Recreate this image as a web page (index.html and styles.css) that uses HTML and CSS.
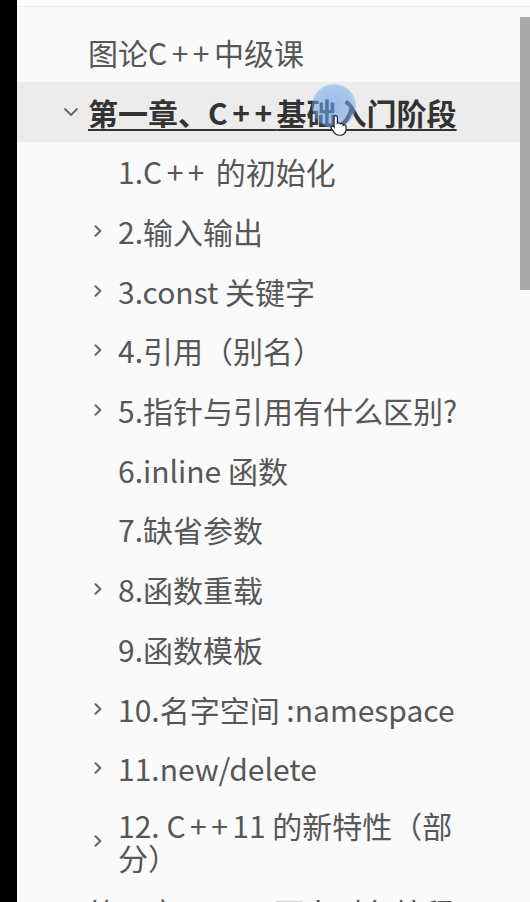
FILE: index.html
```html
<!DOCTYPE html>
<html lang="zh-CN">
<head>
<meta charset="utf-8">
<title>图论C++中级课</title>
<link rel="stylesheet" href="styles.css">
</head>
<body>
<div class="screen">
  <div class="edge"></div>
  <div class="panel">
    <div class="topline"></div>
    <div class="content">
      <ul class="tree">
        <li class="row lv1"><span class="twisty"></span><span class="label">图论<span class="cpp">C++</span>中级课</span></li>
        <li class="row lv1 active"><span class="twisty"><svg class="chev-down" width="14" height="8" viewBox="0 0 14 8"><polyline points="1,1 7,7 13,1"/></svg></span><span class="label strong">第一章、<span class="cpp">C++</span>基础入门阶段</span></li>
        <li class="row lv2"><span class="twisty"></span><span class="label">1.<span class="cpp">C++</span> 的初始化</span></li>
        <li class="row lv2"><span class="twisty"><svg class="chev-right" width="8" height="12" viewBox="0 0 8 12"><polyline points="1.5,1.2 6.3,6 1.5,10.8"/></svg></span><span class="label">2.输入输出</span></li>
        <li class="row lv2"><span class="twisty"><svg class="chev-right" width="8" height="12" viewBox="0 0 8 12"><polyline points="1.5,1.2 6.3,6 1.5,10.8"/></svg></span><span class="label">3.const 关键字</span></li>
        <li class="row lv2"><span class="twisty"><svg class="chev-right" width="8" height="12" viewBox="0 0 8 12"><polyline points="1.5,1.2 6.3,6 1.5,10.8"/></svg></span><span class="label">4.引用（别名）</span></li>
        <li class="row lv2"><span class="twisty"><svg class="chev-right" width="8" height="12" viewBox="0 0 8 12"><polyline points="1.5,1.2 6.3,6 1.5,10.8"/></svg></span><span class="label">5.指针与引用有什么区别?</span></li>
        <li class="row lv2"><span class="twisty"></span><span class="label">6.inline 函数</span></li>
        <li class="row lv2"><span class="twisty"></span><span class="label">7.缺省参数</span></li>
        <li class="row lv2"><span class="twisty"><svg class="chev-right" width="8" height="12" viewBox="0 0 8 12"><polyline points="1.5,1.2 6.3,6 1.5,10.8"/></svg></span><span class="label">8.函数重载</span></li>
        <li class="row lv2"><span class="twisty"></span><span class="label">9.函数模板</span></li>
        <li class="row lv2"><span class="twisty"><svg class="chev-right" width="8" height="12" viewBox="0 0 8 12"><polyline points="1.5,1.2 6.3,6 1.5,10.8"/></svg></span><span class="label">10.名字空间 :namespace</span></li>
        <li class="row lv2"><span class="twisty"><svg class="chev-right" width="8" height="12" viewBox="0 0 8 12"><polyline points="1.5,1.2 6.3,6 1.5,10.8"/></svg></span><span class="label">11.new/delete</span></li>
        <li class="row lv2 multi"><span class="twisty"><svg class="chev-right" width="8" height="12" viewBox="0 0 8 12"><polyline points="1.5,1.2 6.3,6 1.5,10.8"/></svg></span><span class="label">12. <span class="cpp">C++</span>11 的新特性（部分）</span></li>
        <li class="row lv1"><span class="twisty"><svg class="chev-right" width="8" height="12" viewBox="0 0 8 12"><polyline points="1.5,1.2 6.3,6 1.5,10.8"/></svg></span><span class="label">第二章、<span class="cpp">C++</span>面向对象编程</span></li>
      </ul>
      <div class="scrollbar"><div class="thumb"></div></div>
    </div>
  </div>
  <div class="cursor">
    <div class="halo"></div>
    <svg class="hand" width="20" height="24" viewBox="0 0 18 22"><path d="M6 1.5c.9 0 1.5.7 1.5 1.5v5.5c.3-.3.7-.5 1.2-.5.8 0 1.3.5 1.5 1.1.3-.3.7-.5 1.2-.5.9 0 1.5.7 1.5 1.6.3-.2.6-.3 1-.3.9 0 1.6.7 1.6 1.6V14c0 3-2.2 5.5-5.5 5.5H9c-2 0-3.3-.9-4.4-2.4L2 13.4c-.5-.7-.3-1.6.4-2 .6-.4 1.4-.3 1.900.3l.2.3V3c0-.8.7-1.5 1.5-1.5z"/></svg>
  </div>
</div>
</body>
</html>
```

FILE: styles.css
```css
html, body {
  margin: 0;
  padding: 0;
  background: #000;
  overflow: hidden;
}

.screen {
  position: relative;
  display: flex;
  width: 530px;
  height: 902px;
  overflow: hidden;
  font-family: "Noto Sans CJK SC", "Noto Sans", sans-serif;
}

.edge {
  width: 17px;
  flex: none;
  background: #000;
}

.panel {
  flex: 1;
  display: flex;
  flex-direction: column;
  background: #fafafa;
  min-width: 0;
}

.topline {
  height: 6px;
  flex: none;
  background: #fdfdfd;
  border-bottom: 1px solid #ededed;
}

.content {
  flex: 1;
  display: flex;
  min-height: 0;
}

.tree {
  flex: 1;
  list-style: none;
  margin: 0;
  padding: 15.15px 0 0 0;
  min-width: 0;
}

.row {
  display: flex;
  align-items: center;
  box-sizing: border-box;
  min-height: 59.7px;
  padding: 8.5px 62px 8.5px 0;
  font-size: 30px;
  line-height: 32px;
  color: #575757;
}

.row.multi {
  padding-top: 10.5px;
  padding-bottom: 10px;
}

.row.lv1 { padding-left: 47px; }
.row.lv2 { padding-left: 77px; }

.row.active {
  background: #ececec;
}

.twisty {
  flex: none;
  width: 24px;
  display: flex;
  align-items: center;
  justify-content: flex-start;
}

.twisty svg {
  display: block;
  fill: none;
  stroke: #666;
  stroke-linecap: round;
  stroke-linejoin: round;
}

.chev-down { stroke-width: 1.8; }
.chev-right { stroke-width: 2; }

.label {
  min-width: 0;
}

.cpp {
  letter-spacing: 0.15em;
}

.label.strong {
  font-weight: 700;
  color: #333;
  text-decoration: underline;
  text-decoration-thickness: 1.5px;
  text-underline-offset: 4px;
}

.scrollbar {
  width: 10px;
  flex: none;
  padding-top: 10px;
}

.thumb {
  height: 273px;
  background: #aaaaaa;
}

.cursor {
  position: absolute;
  left: 312px;
  top: 84px;
  width: 44px;
  height: 60px;
}

.halo {
  width: 44px;
  height: 44px;
  border-radius: 50%;
  background: radial-gradient(circle, rgba(105,160,232,0.62) 0%, rgba(115,168,235,0.55) 60%, rgba(130,180,240,0.12) 100%);
}

.hand {
  position: absolute;
  left: 17px;
  top: 30px;
  fill: #fff;
  stroke: #222;
  stroke-width: 1.1;
}
```
